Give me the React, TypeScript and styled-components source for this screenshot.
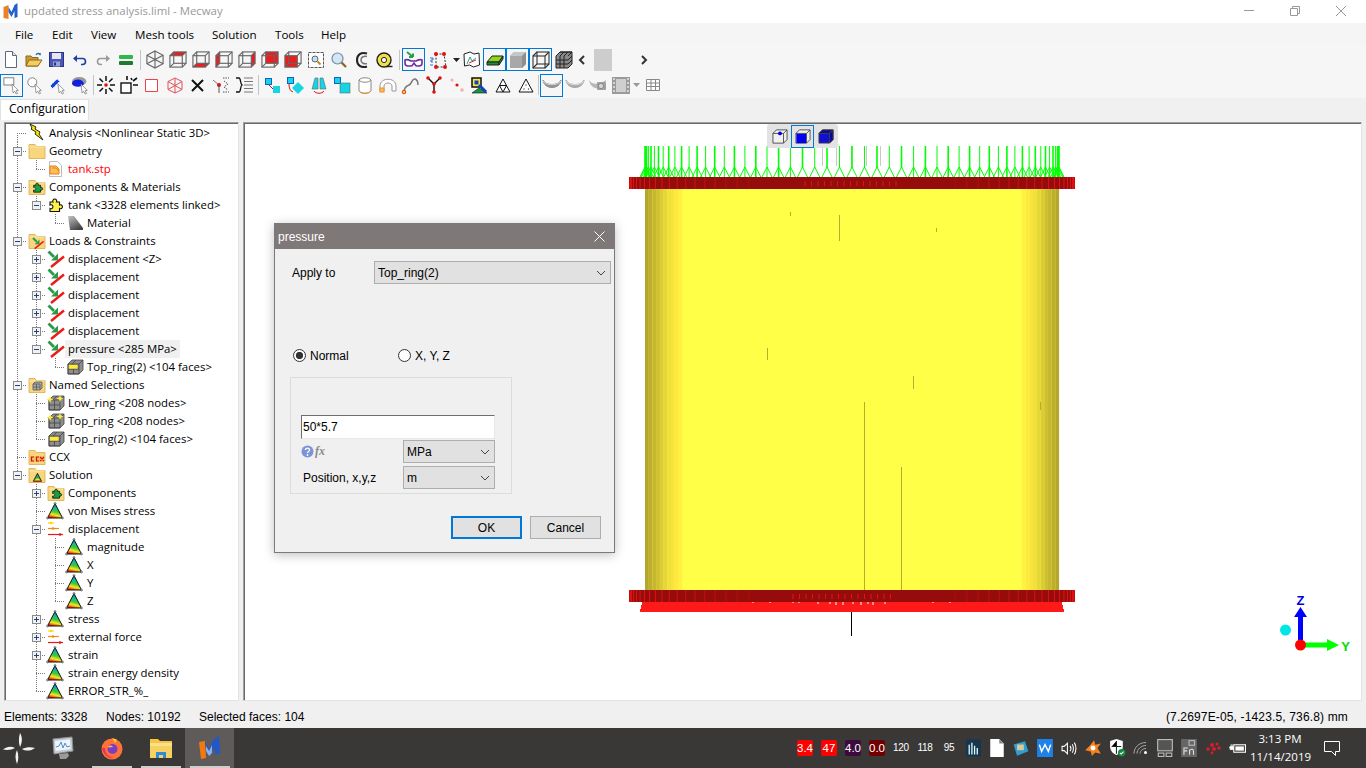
import React from "react";
import styled, { createGlobalStyle } from "styled-components";

const GlobalStyle = createGlobalStyle`
  html, body { margin: 0; padding: 0; background: #f0f0f0; overflow: hidden; }
  #root { width: 1366px; height: 768px; }
`;

const UI = `"Open Sans", "Noto Sans", sans-serif`;
const CLASSIC = `"Liberation Sans", Arial, sans-serif`;

const Page = styled.div`
  position: relative;
  width: 1366px;
  height: 768px;
  display: flex;
  flex-direction: column;
  overflow: hidden;
  background: #f0f0f0;
  font-family: ${UI};
  font-size: 12px;
  color: #000;
`;

const Glyph = styled.svg`
  display: block;
  flex: none;
  overflow: visible;
`;

const TitleBar = styled.div`
  height: 23px;
  box-sizing: border-box;
  display: flex;
  align-items: center;
  background: #fff;
  padding: 0 2px 2px 3px;
`;

const TitleText = styled.span`
  margin-left: 6px;
  font-size: 11.4px;
  color: #999;
  flex: 1;
`;

const WinButton = styled.div`
  width: 46px;
  height: 21px;
  display: flex;
  align-items: center;
  justify-content: center;
`;

const MenuBar = styled.div`
  height: 22px;
  display: flex;
  align-items: center;
  background: #f5f5f5;
  padding-left: 15px;
`;

const MenuItem = styled.span<{ $w: number }>`
  width: ${(p) => p.$w}px;
  font-size: 11.6px;
`;

const ToolRow = styled.div<{ $h: number; $top?: number }>`
  height: ${(p) => p.$h}px;
  box-sizing: border-box;
  padding-top: ${(p) => p.$top ?? 0}px;
  display: flex;
  align-items: center;
  background: #f6f6f6;
`;

const ToolButton = styled.div<{ $on?: boolean; $w?: number }>`
  width: ${(p) => p.$w ?? 23}px;
  height: 23px;
  flex: none;
  box-sizing: border-box;
  display: flex;
  align-items: center;
  justify-content: center;
  border: ${(p) => (p.$on ? "1px solid #0078d7" : "none")};
`;

const ToolSep = styled.div<{ $w?: number }>`
  width: ${(p) => p.$w ?? 6}px;
  height: 20px;
  flex: none;
  background: linear-gradient(#c4c4c4, #c4c4c4) center / 1px 100% no-repeat;
`;

const ScrollStrip = styled.div`
  width: 82px;
  height: 22px;
  flex: none;
  display: flex;
  align-items: center;
  margin-left: -3px;
`;

const ScrollArrow = styled.span`
  width: 18px;
  display: flex;
  justify-content: center;
`;

const ScrollThumb = styled.div`
  width: 18px;
  height: 22px;
  margin-left: 4px;
  margin-right: 23px;
  background: #cdcdcd;
`;

const TabStrip = styled.div`
  height: 22px;
  display: flex;
  align-items: flex-end;
  background: #f0f0f0;
  box-sizing: border-box;
  padding-top: 1px;
`;

const Tab = styled.div`
  width: 89px;
  height: 21px;
  box-sizing: border-box;
  background: #fff;
  border: 1px solid #e2e2e2;
  border-bottom: none;
  display: flex;
  align-items: center;
  padding: 0 0 3px 8px;
  font-size: 12px;
`;

const Workspace = styled.div`
  height: 586px;
  box-sizing: border-box;
  display: flex;
  gap: 4px;
  padding: 2px 4px 5px;
`;

const TreePanel = styled.div`
  width: 235px;
  flex: none;
  box-sizing: border-box;
  overflow: hidden;
  background: #fff;
  border: 1px solid #e3e3e3;
  border-top-color: #a0a0a0;
  border-left-color: #a0a0a0;
  box-shadow: inset 1px 1px #696969;
  padding: 1px 0 0 3px;
`;

const TreeRow = styled.div`
  height: 18px;
  display: flex;
  align-items: center;
`;

const dots = {
  v: "repeating-linear-gradient(to bottom, #7a7a7a 0 1px, transparent 1px 2px)",
  h: "repeating-linear-gradient(to right, #7a7a7a 0 1px, transparent 1px 2px)",
};

type Kind = "none" | "pass" | "tee" | "end" | "start";

const kindBackground = (k: Kind) => {
  if (k === "pass") return `${dots.v} 9px 0 / 1px 100% no-repeat`;
  if (k === "tee") return `${dots.v} 9px 0 / 1px 100% no-repeat, ${dots.h} 9px 9px / 10px 1px no-repeat`;
  if (k === "end") return `${dots.v} 9px 0 / 1px 10px no-repeat, ${dots.h} 9px 9px / 10px 1px no-repeat`;
  if (k === "start") return `${dots.v} 9px 9px / 1px 9px no-repeat, ${dots.h} 9px 9px / 10px 1px no-repeat`;
  return "none";
};

const GuideCell = styled.div<{ $kind: Kind }>`
  width: 19px;
  height: 18px;
  flex: none;
  display: flex;
  align-items: center;
  justify-content: center;
  padding-right: 1px;
  box-sizing: border-box;
  background: ${(p) => kindBackground(p.$kind)};
`;

const TreeIconSlot = styled.div`
  width: 18px;
  height: 18px;
  flex: none;
  margin-left: 1px;
`;

const TreeLabel = styled.span<{ $red?: boolean; $hot?: boolean }>`
  padding: 0 3px;
  height: 18px;
  line-height: 17px;
  white-space: nowrap;
  font-size: 11.4px;
  color: ${(p) => (p.$red ? "#ff0000" : "#000")};
  background: ${(p) => (p.$hot ? "#f0f0f0" : "transparent")};
`;

const Canvas = styled.div`
  position: relative;
  flex: 1;
  box-sizing: border-box;
  overflow: hidden;
  background: #fff;
  border: 1px solid #e3e3e3;
  border-top-color: #a0a0a0;
  border-left-color: #a0a0a0;
  box-shadow: inset 1px 1px #696969;
`;

const ViewOverlay = styled.div`
  position: absolute;
  left: 523px;
  top: 1px;
  height: 24px;
  display: flex;
  align-items: center;
  padding: 0 1px;
  background: #e3e3e3;
  border-radius: 3px;
`;

const StatusBar = styled.div`
  height: 22px;
  display: flex;
  align-items: center;
  padding: 0 18px 0 4px;
  font-family: ${CLASSIC};
  font-size: 12px;
`;

const StatusItem = styled.span<{ $w?: number; $wide?: boolean }>`
  width: ${(p) => (p.$w ? `${p.$w}px` : "auto")};
  white-space: nowrap;
  letter-spacing: ${(p) => (p.$wide ? 0.15 : 0)}px;
`;

const StatusSpacer = styled.div`
  flex: 1;
`;

const TaskBar = styled.div`
  height: 40px;
  display: flex;
  align-items: center;
  background: #393837;
  color: #fff;
`;

const StartSlot = styled.div`
  width: 38px;
  height: 40px;
  flex: none;
  display: flex;
  align-items: center;
  justify-content: center;
`;

const AppTile = styled.div<{ $active?: boolean; $running?: boolean }>`
  width: 49px;
  height: 40px;
  flex: none;
  display: flex;
  align-items: center;
  justify-content: center;
  background: ${(p) =>
    p.$running ? "linear-gradient(#d0cecd, #d0cecd) center bottom / 40px 2px no-repeat" : "none"};
  background-color: ${(p) => (p.$active ? "#5f5b5a" : "transparent")};
`;

const TaskSpacer = styled.div`
  flex: 1;
`;

const TrayBadge = styled.div<{ $bg?: string }>`
  width: 24px;
  flex: none;
  display: flex;
  justify-content: center;
  font-family: ${CLASSIC};
  font-size: ${(p) => (p.$bg ? 11.5 : 10)}px;
  letter-spacing: ${(p) => (p.$bg ? 0 : -0.3)}px;
  span {
    display: block;
    width: 16px;
    height: 16px;
    line-height: 16px;
    text-align: center;
    border-radius: 2px;
    white-space: nowrap;
    background: ${(p) => p.$bg ?? "transparent"};
  }
`;

const TrayIcon = styled.div`
  width: 24px;
  flex: none;
  display: flex;
  justify-content: center;
`;

const Clock = styled.div`
  width: 60px;
  margin-left: 1px;
  text-align: center;
  font-size: 11.5px;
  line-height: 18px;
  white-space: nowrap;
`;

const NotifySlot = styled.div`
  width: 56px;
  flex: none;
  box-sizing: border-box;
  display: flex;
  justify-content: center;
  padding-right: 12px;
`;

/* dialog */
const Dialog = styled.div`
  position: absolute;
  left: 274px;
  top: 223px;
  width: 341px;
  height: 330px;
  box-sizing: border-box;
  border: 1px solid #7a7a7a;
  background: #f0f0f0;
  box-shadow: 0 2px 10px rgba(0, 0, 0, 0.25);
  font-family: ${CLASSIC};
  font-size: 12px;
`;

const DialogTitle = styled.div`
  height: 25px;
  display: flex;
  align-items: center;
  justify-content: space-between;
  background: #7f7878;
  color: #fff;
  padding: 0 9px 0 3px;
`;

const DialogBody = styled.div`
  padding-top: 12px;
`;

const ApplyRow = styled.div`
  height: 23px;
  display: flex;
  align-items: center;
  padding-left: 17px;
`;

const ApplyLabel = styled.span`
  width: 82px;
`;

const SelectBox = styled.div<{ $w: number }>`
  width: ${(p) => p.$w}px;
  height: 23px;
  box-sizing: border-box;
  flex: none;
  display: flex;
  align-items: center;
  justify-content: space-between;
  padding: 0 4px 0 3px;
  background: #e1e1e1;
  border: 1px solid #adadad;
`;

const RadioRow = styled.div`
  height: 22px;
  margin-top: 60px;
  display: flex;
  align-items: center;
  padding: 1px 0 0 18px;
  box-sizing: border-box;
`;

const RadioOption = styled.label<{ $w: number }>`
  width: ${(p) => p.$w}px;
  display: flex;
  align-items: center;
  gap: 4px;
`;

const RadioDot = styled.span<{ $on?: boolean }>`
  width: 13px;
  height: 13px;
  box-sizing: border-box;
  flex: none;
  border-radius: 50%;
  border: 1px solid #333;
  background: ${(p) =>
    p.$on ? "radial-gradient(circle, #333 0 3.4px, #fff 3.9px)" : "#fff"};
`;

const GroupBox = styled.div`
  width: 222px;
  height: 117px;
  box-sizing: border-box;
  margin: 11px 0 0 15px;
  padding: 37px 16px 0 10px;
  border: 1px solid #dcdcdc;
`;

const ValueInput = styled.div`
  height: 24px;
  box-sizing: border-box;
  display: flex;
  align-items: center;
  padding-left: 1px;
  background: #fff;
  border: 1px solid #e8e8e8;
  border-top: 1px solid #6e6e6e;
  border-left: 1px solid #6e6e6e;
`;

const FieldRow = styled.div<{ $gap: number }>`
  display: flex;
  align-items: center;
  justify-content: space-between;
  margin-top: ${(p) => p.$gap}px;
`;

const HelpGroup = styled.div`
  display: flex;
  align-items: center;
  gap: 1px;
`;

const FxMark = styled.span`
  font-family: "Liberation Serif", serif;
  font-style: italic;
  font-weight: 700;
  font-size: 12px;
  color: #8a8a8a;
`;

const PositionLabel = styled.span`
  margin-left: 2px;
`;

const ButtonRow = styled.div`
  display: flex;
  justify-content: flex-end;
  gap: 8px;
  margin-top: 22px;
  padding-right: 13px;
`;

const DialogButton = styled.div<{ $primary?: boolean }>`
  width: 71px;
  height: 23px;
  box-sizing: border-box;
  display: flex;
  align-items: center;
  justify-content: center;
  background: #e1e1e1;
  border: ${(p) => (p.$primary ? "2px solid #0078d7" : "1px solid #adadad")};
`;

/* ---------- toolbar icons ---------- */

const Chevron = () => (
  <Glyph width="10" height="6" viewBox="0 0 10 6">
    <path d="M1 1l4 4 4-4" fill="none" stroke="#444" />
  </Glyph>
);

type Face = "none" | "top" | "bottom" | "left" | "right" | "back" | "front" | "spokes";

const FACE_POINTS: Record<string, string> = {
  top: "2,6 6,2 19,2 15,6",
  bottom: "2,18 6,14 19,14 15,18",
  left: "2,6 6,2 6,14 2,18",
  right: "15,6 19,2 19,14 15,18",
  back: "6,2 19,2 19,14 6,14",
  front: "2,6 15,6 15,18 2,18",
};

const WireCube = ({ face }: { face: Face }) => (
  <Glyph width="20" height="19" viewBox="0 0 21 20">
    {FACE_POINTS[face] && <polygon points={FACE_POINTS[face]} fill="#ee1c1c" />}
    {face === "spokes" ? (
      <g fill="none" stroke="#666" strokeWidth="1.2">
        <polygon points="10.5,1 19,5.5 19,14.5 10.5,19 2,14.5 2,5.5" />
        <path d="M10.5 10V1M10.5 10L2 14.5M10.5 10L19 14.5M10.5 10V19M10.5 10L2 5.5M10.5 10L19 5.5" />
      </g>
    ) : (
      <g fill="none" stroke="#666" strokeWidth="1.2">
        <rect x="2" y="6" width="13" height="12" />
        <rect x="6" y="2" width="13" height="12" />
        <path d="M2 6L6 2M15 6L19 2M15 18L19 14M2 18L6 14" />
      </g>
    )}
  </Glyph>
);

const ArrowTail = () => <path d="M10 9l7 7-2.4.3 1.6 3-1.6.7-1.4-3-2 1.8z" fill="#fff" stroke="#777" strokeWidth=".8" />;

const ScrollChevron = ({ dir }: { dir: "left" | "right" }) => (
  <Glyph width="7" height="10" viewBox="0 0 7 10">
    <path d={dir === "left" ? "M6 1L2 5l4 4" : "M1 1l4 4-4 4"} fill="none" stroke="#333" strokeWidth="2" />
  </Glyph>
);

const tool = {
  newDoc: (
    <Glyph width="14" height="17" viewBox="0 0 14 17">
      <path d="M1.5.5h7l4 4v12h-11z" fill="#fff" stroke="#5a6a80" />
      <path d="M8.5.5v4h4" fill="#dfe7f2" stroke="#5a6a80" />
    </Glyph>
  ),
  open: (
    <Glyph width="18" height="16" viewBox="0 0 18 16">
      <path d="M1 14V4h5l1 1.5h6V14z" fill="#c99a33" stroke="#8b6a1d" />
      <path d="M1 14l3-6h13l-4 6z" fill="#f4cd5e" stroke="#8b6a1d" />
      <path d="M11 3c1-2 3-2 4-1" fill="none" stroke="#2f6fb0" strokeWidth="1.2" />
      <path d="M16 .8l-.4 2.8-2.4-1z" fill="#2f6fb0" />
    </Glyph>
  ),
  save: (
    <Glyph width="15" height="15" viewBox="0 0 15 15">
      <rect x=".5" y=".5" width="14" height="14" fill="#4b57b8" stroke="#2c3480" />
      <rect x="3" y="1" width="9" height="6" fill="#e8e8f5" />
      <rect x="4" y="9.5" width="7" height="5" fill="#9aa0d8" />
      <rect x="5" y="10.5" width="2" height="3" fill="#2c3480" />
    </Glyph>
  ),
  undo: (
    <Glyph width="14" height="10" viewBox="0 0 14 10">
      <path d="M3 3.5h6.5a3 3 0 0 1 0 6H8" fill="none" stroke="#1c3fa8" strokeWidth="1.6" />
      <path d="M0 3.5L4 0v7z" fill="#1c3fa8" />
    </Glyph>
  ),
  redo: (
    <Glyph width="14" height="10" viewBox="0 0 14 10">
      <path d="M11 3.5H4.5a3 3 0 0 0 0 6H6" fill="none" stroke="#9a9a9a" strokeWidth="1.6" />
      <path d="M14 3.5L10 0v7z" fill="#9a9a9a" />
    </Glyph>
  ),
  bars: (
    <Glyph width="14" height="12" viewBox="0 0 14 12">
      <rect y="1" width="14" height="4" rx="1" fill="#2fb84a" />
      <rect y="7" width="14" height="4" rx="1" fill="#1f7a34" />
    </Glyph>
  ),
  zoomBox: (
    <Glyph width="16" height="16" viewBox="0 0 16 16">
      <rect x=".5" y=".5" width="15" height="15" fill="#fff" stroke="#555" strokeDasharray="3 1" />
      <circle cx="7" cy="7" r="3" fill="#bfe0f5" stroke="#666" />
      <path d="M9.5 9.5l3 3" stroke="#c08a2c" strokeWidth="2" />
    </Glyph>
  ),
  magnifier: (
    <Glyph width="16" height="16" viewBox="0 0 16 16">
      <circle cx="6.5" cy="6.5" r="5.5" fill="#cfe6f7" stroke="#7a8a99" strokeWidth="1.2" />
      <path d="M10.5 10.5l4.5 4.5" stroke="#8a6a30" strokeWidth="2.4" />
    </Glyph>
  ),
  rotate: (
    <Glyph width="14" height="18" viewBox="0 0 14 18">
      <path d="M12 2.500C6 .5 2 4 2 9s4 8.500 10 6.500" fill="none" stroke="#222" strokeWidth="2" />
      <path d="M12 5.500C9 4.500 6 6 6 9s3 4.500 6 3.500" fill="none" stroke="#777" strokeWidth="1.500" />
    </Glyph>
  ),
  tape: (
    <Glyph width="17" height="16" viewBox="0 0 17 16">
      <circle cx="8" cy="8" r="7" fill="#f1e04a" stroke="#222" strokeWidth="1.400" />
      <circle cx="8" cy="8" r="2.600" fill="#fff" stroke="#222" />
      <path d="M10 14.500h6.500" stroke="#222" strokeWidth="1.400" />
    </Glyph>
  ),
  glasses: (
    <Glyph width="19" height="18" viewBox="0 0 19 18">
      <path d="M3 1l6 5M9 6V2.500M9 6H5" stroke="#27a04a" strokeWidth="2" fill="none" />
      <path d="M1 9c2-1 4 0 6 1h5c2-1 4-2 6-1v3c0 2-1 3-3 3h-2c-2 0-2-2-3-3-1 1-1 3-3 3H4c-2 0-3-1-3-3z" fill="#fff" stroke="#6a2fa0" strokeWidth="1.600" />
    </Glyph>
  ),
  dots: (
    <Glyph width="19" height="19" viewBox="0 0 19 19">
      <path d="M7 4h8l2 13H7z" fill="none" stroke="#333" strokeDasharray="2 1.500" />
      <circle cx="7" cy="4" r="2" fill="#e01010" />
      <circle cx="15" cy="4" r="2" fill="#e01010" />
      <circle cx="7" cy="17" r="2" fill="#e01010" />
      <circle cx="16" cy="17" r="2" fill="#e01010" />
      <path d="M1 8h3v2H2v2h2M1 15h3" fill="none" stroke="#2f6fe0" />
    </Glyph>
  ),
  drop: (
    <Glyph width="7" height="4" viewBox="0 0 7 4">
      <path d="M0 0h7L3.500 4z" fill="#222" />
    </Glyph>
  ),
  paper: (
    <Glyph width="17" height="17" viewBox="0 0 17 17">
      <path d="M1 3l6-2 4 2 5-1 .5 12-6 2-4-2-5 1z" fill="#fff" stroke="#222" />
      <path d="M4 13l3-7 2 4 4-3" fill="none" stroke="#2aa198" />
      <path d="M6 12l7-3" stroke="#e02020" />
    </Glyph>
  ),
  slab: (
    <Glyph width="18" height="14" viewBox="0 0 18 14">
      <path d="M1 9l5-6h11l-4 6z" fill="#8fd420" stroke="#222" />
      <path d="M1 9h12v3H1z" fill="#1f8a3a" stroke="#222" />
      <path d="M13 9l4-6v3l-4 6z" fill="#1f8a3a" stroke="#222" />
    </Glyph>
  ),
  solid: (
    <Glyph width="18" height="18" viewBox="0 0 18 18">
      <path d="M1 5l4-4h12v12l-4 4H1z" fill="#a8a8a8" />
      <path d="M1 5l4-4h12l-4 4z" fill="#c6c6c6" />
      <path d="M13 5l4-4v12l-4 4z" fill="#8e8e8e" />
    </Glyph>
  ),
  wire: (
    <Glyph width="18" height="18" viewBox="0 0 18 18">
      <g fill="none" stroke="#333" strokeWidth="1.100">
        <rect x="1" y="5" width="12" height="12" />
        <rect x="5" y="1" width="12" height="12" />
        <path d="M1 5l4-4M13 5l4-4M13 17l4-4M1 17l4-4" />
      </g>
    </Glyph>
  ),
  mesh: (
    <Glyph width="18" height="18" viewBox="0 0 18 18">
      <path d="M1 5l4-4h12v12l-4 4H1z" fill="#8a8a8a" stroke="#222" />
      <path d="M1 9h12M1 13h12M5 5v12M9 5v12M13 5l4-4M5 5l4-4M9 5l4-4M5 1h12M13 9l4-4M13 13l4-4" stroke="#222" fill="none" />
    </Glyph>
  ),
  pickBox: (
    <Glyph width="20" height="18" viewBox="0 0 20 20">
      <rect x="1" y="2" width="11" height="8" fill="#fff" stroke="#777" />
      <ArrowTail />
    </Glyph>
  ),
  pickNode: (
    <Glyph width="20" height="18" viewBox="0 0 20 20">
      <circle cx="7" cy="7" r="5" fill="#fff" stroke="#777" />
      <ArrowTail />
    </Glyph>
  ),
  pickEdge: (
    <Glyph width="20" height="18" viewBox="0 0 20 20">
      <path d="M1 11l8-8 3 3-8 8z" fill="#1540e0" stroke="#fff" strokeDasharray="3 1" />
      <ArrowTail />
    </Glyph>
  ),
  pickFace: (
    <Glyph width="20" height="18" viewBox="0 0 20 20">
      <ellipse cx="8" cy="6" rx="8" ry="5" fill="#999" />
      <ellipse cx="6.500" cy="8" rx="6.500" ry="4" fill="#1020e0" />
      <ArrowTail />
    </Glyph>
  ),
  burst: (
    <Glyph width="18" height="18" viewBox="0 0 18 18">
      <circle cx="9" cy="9" r="1.800" fill="#e01010" />
      <path d="M9 0v5M9 13v5M0 9h5M13 9h5M2.500 2.500l3.500 3.500M12 12l3.500 3.500M15.500 2.500L12 6M6 12l-3.500 3.500" stroke="#111" strokeWidth="1.500" />
    </Glyph>
  ),
  burstBox: (
    <Glyph width="18" height="18" viewBox="0 0 18 18">
      <rect x="1" y="7" width="10" height="10" fill="#fff" stroke="#111" strokeWidth="1.400" />
      <path d="M13 5l4-3M7 4V0M13 9h5M11 2l1 2" stroke="#111" strokeWidth="1.600" />
    </Glyph>
  ),
  redSquare: (
    <Glyph width="13" height="13" viewBox="0 0 13 13">
      <path d="M.5.500h12v12H.5z" fill="#fff" stroke="#f0404a" />
    </Glyph>
  ),
  redCube: (
    <Glyph width="16" height="17" viewBox="0 0 16 17">
      <g fill="none" stroke="#e0505a">
        <path d="M8 1l7 3.500v8L8 16l-7-3.500v-8z" />
        <path d="M8 8.500V16M8 8.500l7-4M8 8.500l-7-4M1 12.500l7-4 7 4M8 1v7.500" />
      </g>
    </Glyph>
  ),
  cross: (
    <Glyph width="13" height="13" viewBox="0 0 13 13">
      <path d="M1 1l11 11M12 1L1 12" stroke="#111" strokeWidth="2" />
    </Glyph>
  ),
  nodeZig: (
    <Glyph width="18" height="18" viewBox="0 0 18 18">
      <path d="M1 4l6 5" stroke="#777" />
      <circle cx="7" cy="9" r="2" fill="#e01010" />
      <path d="M7 9v8" stroke="#555" />
      <path d="M11 2h6M11 16h6M12 5l4 3-4 3 4 3" fill="none" stroke="#555" strokeDasharray="1.500 1" />
    </Glyph>
  ),
  listBrace: (
    <Glyph width="18" height="16" viewBox="0 0 18 16">
      <path d="M1 1h3c2 0 1 6 3 7-2 1-1 7-3 7H1" fill="none" stroke="#111" strokeWidth="1.300" />
      <path d="M9 1h9M9 4.500h9M9 8h9M9 11.500h9M9 15h9" stroke="#777" />
    </Glyph>
  ),
  squares: (
    <Glyph width="15" height="15" viewBox="0 0 15 15">
      <rect x=".5" y=".5" width="6" height="6" fill="#15d5e5" stroke="#1060d0" />
      <rect x="8" y="8" width="7" height="7" fill="#15d5e5" />
      <path d="M4 7l4 4" stroke="#e01010" />
    </Glyph>
  ),
  squareDiamond: (
    <Glyph width="17" height="17" viewBox="0 0 17 17">
      <rect x=".5" y=".5" width="6" height="6" fill="#15d5e5" stroke="#1060d0" />
      <path d="M11 5l6 6-6 6-6-6z" fill="#15d5e5" />
      <path d="M2 7c0 4 1 7 4 8" stroke="#e01010" fill="none" />
    </Glyph>
  ),
  mirror: (
    <Glyph width="16" height="17" viewBox="0 0 16 17">
      <path d="M1 12L4 1h3v11zM15 12L12 1H9v11z" fill="#15d5e5" stroke="#666" strokeWidth=".6" />
      <path d="M3 14c2 3 8 3 10 0" fill="none" stroke="#e01010" />
    </Glyph>
  ),
  squareBig: (
    <Glyph width="16" height="16" viewBox="0 0 16 16">
      <rect x=".5" y=".5" width="6" height="6" fill="#15d5e5" stroke="#1060d0" />
      <rect x="6" y="6" width="10" height="10" fill="#15d5e5" stroke="#555" strokeWidth=".5" />
    </Glyph>
  ),
  can: (
    <Glyph width="14" height="17" viewBox="0 0 14 17">
      <path d="M1 3c2-3 10-3 12 0v11c-2 3-10 3-12 0z" fill="#fff" stroke="#888" />
      <path d="M1 3c2 3 10 3 12 0" fill="none" stroke="#888" />
      <path d="M1 14c2 3 10 3 12 0" fill="none" stroke="#f09020" />
    </Glyph>
  ),
  arch: (
    <Glyph width="18" height="15" viewBox="0 0 18 15">
      <path d="M1 13V8c0-9 16-9 16 0v5h-4V8c0-4-8-4-8 0v5z" fill="#fff" stroke="#999" />
      <rect x="1" y="10" width="4" height="4" fill="#f0c060" stroke="#f09020" />
    </Glyph>
  ),
  sweep: (
    <Glyph width="17" height="17" viewBox="0 0 17 17">
      <path d="M2 16c0-5 2-7 5-8s3-7 6-6 3 5 3 6" fill="none" stroke="#777" strokeWidth="1.500" />
      <circle cx="2" cy="15" r="1.800" fill="#f0d040" stroke="#e04020" />
    </Glyph>
  ),
  fork: (
    <Glyph width="16" height="18" viewBox="0 0 16 18">
      <path d="M2 2l6 6 6-6M8 8v8" stroke="#111" strokeWidth="1.400" fill="none" />
      <circle cx="2" cy="2" r="1.800" fill="#e01010" />
      <circle cx="14" cy="2" r="1.800" fill="#e01010" />
      <circle cx="8" cy="8" r="1.800" fill="#e01010" />
      <circle cx="8" cy="16" r="1.800" fill="#e01010" />
    </Glyph>
  ),
  scatter: (
    <Glyph width="14" height="14" viewBox="0 0 14 14">
      <circle cx="2" cy="2" r="1.500" fill="#eeb0b0" />
      <circle cx="7" cy="7" r="1.600" fill="#e01010" />
      <circle cx="12" cy="12" r="1.700" fill="#eeb0b0" />
    </Glyph>
  ),
  nodeMap: (
    <Glyph width="17" height="17" viewBox="0 0 17 17">
      <rect x="1" y="1" width="9" height="9" fill="#f5e94a" stroke="#111" strokeWidth="1.500" />
      <rect x="3.500" y="3.500" width="4" height="4" fill="#1540c0" />
      <path d="M1 16l7-5 8 5z" fill="#129a3a" stroke="#111" strokeWidth=".6" />
      <path d="M8 8l7 7" stroke="#1540c0" strokeWidth="3" />
    </Glyph>
  ),
  triTri: (
    <Glyph width="16" height="15" viewBox="0 0 16 15">
      <path d="M8 1l7 13H1zM4.500 7.500h7M8 14L4.500 7.500M8 14l3.500-6.500" fill="#fff" stroke="#111" />
    </Glyph>
  ),
  triDots: (
    <Glyph width="16" height="15" viewBox="0 0 16 15">
      <path d="M8 1l7 13H1z" fill="#fff" stroke="#111" />
      <circle cx="8" cy="7" r=".7" fill="#444" />
      <circle cx="6" cy="11" r=".7" fill="#444" />
      <circle cx="10.500" cy="11" r=".7" fill="#444" />
    </Glyph>
  ),
  bowl: (shade: string) => (
    <Glyph width="20" height="12" viewBox="0 0 20 12">
      <path d="M1 1c2 6 16 6 18 0-1 10-17 10-18 0z" fill={shade} stroke={shade} />
      <path d="M1 2c3 5 15 5 18 0" fill="none" stroke="#fff" strokeWidth=".6" />
    </Glyph>
  ),
  camera: (
    <Glyph width="19" height="16" viewBox="0 0 19 16">
      <path d="M1 3c3 5 9 5 17 0-1 10-15 12-17 0z" fill="#b8b8b8" />
      <rect x="9" y="5" width="9" height="8" rx="1" fill="#a0a0a0" />
      <circle cx="13" cy="9" r="2.600" fill="#d6d6d6" stroke="#888" />
    </Glyph>
  ),
  film: (
    <Glyph width="18" height="17" viewBox="0 0 18 17">
      <rect width="18" height="17" fill="#9a9a9a" />
      <rect x="4" y="2" width="10" height="13" fill="#cfcfcf" />
      <path d="M1 2h2M1 6h2M1 10h2M1 14h2M15 2h2M15 6h2M15 10h2M15 14h2" stroke="#e6e6e6" strokeWidth="1.500" />
    </Glyph>
  ),
  dropGray: (
    <Glyph width="7" height="4" viewBox="0 0 7 4">
      <path d="M0 0h7L3.500 4z" fill="#999" />
    </Glyph>
  ),
  table: (
    <Glyph width="14" height="12" viewBox="0 0 14 12">
      <path d="M.5.500h13v11H.5zM.5 4h13M.5 7.500h13M5 .500v11M9.500.500v11" fill="#fff" stroke="#888" />
    </Glyph>
  ),
};

/* ---------- tree icons ---------- */

const FolderBase = ({ children }: { children?: React.ReactNode }) => (
  <Glyph width="18" height="18" viewBox="0 0 18 18">
    <path d="M1 2.500h6l1.500 2H17v12H1z" fill="#f8d67e" stroke="#d9a94a" strokeWidth=".8" />
    <path d="M1.500 5h15" stroke="#fdeaa8" />
    {children}
  </Glyph>
);

const Puzzle = ({ fill, stroke, transform }: { fill: string; stroke: string; transform?: string }) => (
  <path
    transform={transform}
    d="M3 6h3a2 2 0 1 1 3.500 0h3v3a2 2 0 1 1 0 3.500v3H3v-3a2 2 0 1 0 0-3.500z"
    fill={fill}
    stroke={stroke}
    strokeWidth="1.100"
  />
);

const LoadMark = () => (
  <>
    <path d="M4 17L17 6.500" stroke="#f01818" strokeWidth="2.400" />
    <path d="M1.500 1.500L7 7" stroke="#2a9a48" strokeWidth="2.800" />
    <path d="M11 10.500V3.500L4 10.500z" fill="#2a9a48" />
  </>
);

const GrayCube = ({ mark }: { mark: "faces" | "nodes" }) => (
  <Glyph width="18" height="18" viewBox="0 0 18 18">
    <path d="M2 6l4-4h11v10l-4 4H2z" fill="#8e8e8e" stroke="#444" strokeWidth=".8" />
    <path d="M2 6h11v10H2zM7.500 6v10M2 11h11M13 6l4-4M6 6l4-4" fill="none" stroke="#444" strokeWidth=".8" />
    {mark === "faces" ? (
      <rect x="2.500" y="6.500" width="9.500" height="4.500" fill="#ffe93c" stroke="#444" strokeWidth=".4" />
    ) : (
      <>
        <path d="M2 2.500l1 2.500 2.500 1-2.500 1-1 2.500-1-2.500L-1.500 6 1 5z" fill="#ffe93c" transform="translate(1 -.5)" />
        <path d="M13 1l1 2.500 2.500 1-2.500 1-1 2.500-1-2.500-2.500-1 2.500-1z" fill="#ffe93c" />
      </>
    )}
  </Glyph>
);

const Contour = () => (
  <Glyph width="18" height="18" viewBox="0 0 18 18">
    <defs>
      <linearGradient id="contour" x1=".6" y1="0" x2=".35" y2="1">
        <stop offset="0" stopColor="#1050d0" />
        <stop offset=".3" stopColor="#10b8a0" />
        <stop offset=".55" stopColor="#40c830" />
        <stop offset=".78" stopColor="#f8e820" />
        <stop offset="1" stopColor="#e81010" />
      </linearGradient>
    </defs>
    <path d="M8 1.500l7.500 14.500H.5z" fill="url(#contour)" stroke="#111" strokeWidth="1" />
    <circle cx="8" cy="1.500" r=".9" fill="#fff" stroke="#111" strokeWidth=".6" />
    <circle cx=".5" cy="16" r=".9" fill="#fff" stroke="#111" strokeWidth=".6" />
    <circle cx="15.500" cy="16" r=".9" fill="#fff" stroke="#111" strokeWidth=".6" />
  </Glyph>
);

const treeIcon: Record<string, React.ReactNode> = {
  bolt: (
    <Glyph width="18" height="18" viewBox="0 0 18 18">
      <path d="M2 0l6 3-1 2 5 3-1 2 4 6-8-6 1-2-5-3 1-1z" fill="#ffe600" stroke="#111" strokeWidth=".9" />
    </Glyph>
  ),
  folder: <FolderBase />,
  file: (
    <Glyph width="18" height="18" viewBox="0 0 18 18">
      <path d="M2.500 1.500h8l4 4v11h-12z" fill="#fff" stroke="#bbb" />
      <path d="M3 6h6l3 3v5H3z" fill="#fbbf5a" stroke="#f07a10" />
      <path d="M5 8h4l3 3" fill="none" stroke="#f07a10" />
    </Glyph>
  ),
  folderPuzzle: (
    <FolderBase>
      <Puzzle fill="#18a040" stroke="#111" transform="translate(3.500 3) scale(.72)" />
    </FolderBase>
  ),
  puzzle: (
    <Glyph width="18" height="18" viewBox="0 0 18 18">
      <Puzzle fill="#fff34a" stroke="#111" />
    </Glyph>
  ),
  material: (
    <Glyph width="18" height="18" viewBox="0 0 18 18">
      <defs>
        <linearGradient id="wedge" x1="0" y1="0" x2=".6" y2="1">
          <stop offset="0" stopColor="#c4c4c4" />
          <stop offset="1" stopColor="#444" />
        </linearGradient>
      </defs>
      <path d="M2 2h6l9 12v2H4z" fill="url(#wedge)" />
    </Glyph>
  ),
  folderLoads: (
    <FolderBase>
      <g transform="translate(4 5) scale(.68)">
        <LoadMark />
      </g>
    </FolderBase>
  ),
  loads: (
    <Glyph width="18" height="18" viewBox="0 0 18 18">
      <LoadMark />
    </Glyph>
  ),
  faces: <GrayCube mark="faces" />,
  nodes: <GrayCube mark="nodes" />,
  folderCube: (
    <FolderBase>
      <g transform="translate(5 6)" fill="none" stroke="#555" strokeWidth=".8">
        <path d="M0 2l2-2h7v6l-2 2H0z" fill="#aaa" />
        <path d="M0 2h7v6M3.500 2v6M0 5h7" />
      </g>
    </FolderBase>
  ),
  folderCcx: (
    <Glyph width="18" height="18" viewBox="0 0 18 18">
      <path d="M1 2.500h6l1.500 2H17v12H1z" fill="#f8d67e" stroke="#d9a94a" strokeWidth=".8" />
      <path d="M2 8h14v6H2z" fill="#f8c060" />
      <path d="M6 9H3.500v4H6M11 9H8.500v4H11M12 9l4 4M16 9l-4 4" fill="none" stroke="#d01010" strokeWidth="1.200" />
    </Glyph>
  ),
  folderContour: (
    <FolderBase>
      <g transform="translate(4.500 6.500) scale(.55)">
        <path d="M9 1.500l7.500 14.500h-15z" fill="#20b060" stroke="#111" strokeWidth="1.500" />
        <path d="M3 15l4-4h4l4 4z" fill="#f5e020" />
        <path d="M3 15.500h12" stroke="#e81010" strokeWidth="1.500" />
      </g>
    </FolderBase>
  ),
  contour: <Contour />,
  arrows: (
    <Glyph width="18" height="18" viewBox="0 0 18 18">
      <path d="M1 3h6" stroke="#ffd800" strokeWidth="1.200" />
      <circle cx="4" cy="3" r="1.200" fill="#ffd800" />
      <path d="M1 8.500h11" stroke="#f58a10" strokeWidth="1.200" />
      <circle cx="6" cy="8.500" r="1.200" fill="#f58a10" />
      <path d="M1 14.500h15" stroke="#e81818" strokeWidth="1.200" />
      <circle cx="13" cy="14.500" r="1.300" fill="#e81818" />
    </Glyph>
  ),
};

/* ---------- tree data ---------- */

type Node = {
  label: string;
  icon: string;
  red?: boolean;
  hot?: boolean;
  closed?: boolean;
  children?: Node[];
};

const TREE: Node[] = [
  { label: "Analysis <Nonlinear Static 3D>", icon: "bolt" },
  { label: "Geometry", icon: "folder", children: [{ label: "tank.stp", icon: "file", red: true }] },
  {
    label: "Components & Materials",
    icon: "folderPuzzle",
    children: [
      {
        label: "tank <3328 elements linked>",
        icon: "puzzle",
        children: [{ label: "Material", icon: "material" }],
      },
    ],
  },
  {
    label: "Loads & Constraints",
    icon: "folderLoads",
    children: [
      { label: "displacement <Z>", icon: "loads", closed: true },
      { label: "displacement", icon: "loads", closed: true },
      { label: "displacement", icon: "loads", closed: true },
      { label: "displacement", icon: "loads", closed: true },
      { label: "displacement", icon: "loads", closed: true },
      {
        label: "pressure <285 MPa>",
        icon: "loads",
        hot: true,
        children: [{ label: "Top_ring(2) <104 faces>", icon: "faces" }],
      },
    ],
  },
  {
    label: "Named Selections",
    icon: "folderCube",
    children: [
      { label: "Low_ring <208 nodes>", icon: "nodes" },
      { label: "Top_ring <208 nodes>", icon: "nodes" },
      { label: "Top_ring(2) <104 faces>", icon: "faces" },
    ],
  },
  { label: "CCX", icon: "folderCcx" },
  {
    label: "Solution",
    icon: "folderContour",
    children: [
      { label: "Components", icon: "folderPuzzle", closed: true },
      { label: "von Mises stress", icon: "contour" },
      {
        label: "displacement",
        icon: "arrows",
        children: [
          { label: "magnitude", icon: "contour" },
          { label: "X", icon: "contour" },
          { label: "Y", icon: "contour" },
          { label: "Z", icon: "contour" },
        ],
      },
      { label: "stress", icon: "contour", closed: true },
      { label: "external force", icon: "arrows", closed: true },
      { label: "strain", icon: "contour", closed: true },
      { label: "strain energy density", icon: "contour" },
      { label: "ERROR_STR_%_", icon: "contour" },
    ],
  },
];

const Expander = ({ open }: { open: boolean }) => (
  <Glyph width="9" height="9" viewBox="0 0 9 9">
    <rect x=".5" y=".5" width="8" height="8" fill="#f2f2f2" stroke="#8a8a8a" />
    <path d={open ? "M2 4.500h5" : "M2 4.500h5M4.500 2v5"} stroke="#20408a" />
  </Glyph>
);

const TreeBranch = ({ nodes, trail }: { nodes: Node[]; trail: boolean[] }) => (
  <>
    {nodes.map((node, i) => {
      const isLast = i === nodes.length - 1;
      const isVeryFirst = trail.length === 0 && i === 0;
      const hasToggle = node.closed || !!node.children;
      const kind: Kind = isVeryFirst ? "start" : isLast ? "end" : "tee";
      return (
        <React.Fragment key={`${node.label}-${i}`}>
          <TreeRow>
            {trail.map((more, t) => (
              <GuideCell key={t} $kind={more ? "pass" : "none"} />
            ))}
            <GuideCell $kind={kind}>{hasToggle && <Expander open={!node.closed} />}</GuideCell>
            <TreeIconSlot>{treeIcon[node.icon]}</TreeIconSlot>
            <TreeLabel $red={node.red} $hot={node.hot}>
              {node.label}
            </TreeLabel>
          </TreeRow>
          {node.children && <TreeBranch nodes={node.children} trail={[...trail, !isLast]} />}
        </React.Fragment>
      );
    })}
  </>
);

/* ---------- model drawing ---------- */

const CENTER = 852;
const RADIUS = 207;
const SIDE_SHADES = ["#b5a72d", "#bdae2e", "#c6b730", "#cfc033", "#dbcc36", "#e5d63a", "#f0e03c", "#f8e33d", "#ffe93f", "#fff043"];

const ringX = (i: number, n: number, r = RADIUS) => CENTER + r * Math.sin((i / n) * Math.PI * 2);

const pressureTicks = Array.from({ length: 53 }, (_, i) => ringX(i - 26, 104));
const bandTicks = Array.from({ length: 53 }, (_, i) => ringX(i - 26, 104, 222)).filter(
  (x) => Math.abs(x - CENTER) > 95
);
const tickRun = (from: number, to: number) =>
  Array.from({ length: Math.floor((to - from) / 6.5) + 1 }, (_, i) => from + i * 6.5);

const ModelView = () => (
  <Glyph width="1117" height="577" viewBox="244 123 1117 577">
    {/* tank wall */}
    <rect x="645" y="189" width="414" height="402" fill="#ffff47" />
    {SIDE_SHADES.map((c, i) => (
      <React.Fragment key={c}>
        <rect x={645 + i * 3.7} y="189" width="3.800" height="402" fill={c} />
        <rect x={1055.300 - i * 3.7} y="189" width="3.800" height="402" fill={c} />
      </React.Fragment>
    ))}
    <g stroke="#b9ab2c" strokeWidth="1">
      <path d="M864.500 402V590M901.500 467V590M839.500 215V241M767.500 348V360M913.500 376V389M1040.500 402V410M790.500 212V216M936.500 228V232" />
    </g>
    {/* applied pressure arrows */}
    <g stroke="#c8c8c8">
      <path d="M822.500 146V166M836.500 146V166M851.500 146V166M866.500 146V166M880.500 146V166" />
    </g>
    <g fill="none" stroke="#00ff00">
      {pressureTicks.map((x, i) => (
        <React.Fragment key={i}>
          <path d={`M${x.toFixed(1)} 146V${Math.abs(x - CENTER) < 60 ? 168 : 177}`} strokeWidth={i % 2 ? 1 : 1.6} />
          <path d={`M${(x - 5).toFixed(1)} 177L${x.toFixed(1)} 167L${(x + 5).toFixed(1)} 177`} />
        </React.Fragment>
      ))}
    </g>
    {/* end rings */}
    <rect x="629" y="177" width="446" height="12" fill="#960c0c" />
    <rect x="629" y="590" width="446" height="12" fill="#960c0c" />
    <g stroke="#e21212">
      {bandTicks.map((x, i) => (
        <React.Fragment key={i}>
          <path d={`M${x.toFixed(1)} 177V189`} opacity={Math.min(1, (Math.abs(x - CENTER) - 60) / 140)} />
          <path d={`M${x.toFixed(1)} 590V602`} opacity={Math.min(1, (Math.abs(x - CENTER) - 60) / 140)} />
        </React.Fragment>
      ))}
      {tickRun(793, 892).map((x) => (
        <path key={x} d={`M${x.toFixed(1)} 594V599`} />
      ))}
      {tickRun(805, 900).map((x) => (
        <path key={x} d={`M${x.toFixed(1)} 181V186`} />
      ))}
    </g>
    {/* base */}
    <path d="M642 602H1062V605H1063V609H1064V612H640V609H641V605H642z" fill="#ff1a1a" />
    <path d="M753 602v1M770 602v1M793 602v1M799 602v1M818 602v2M830 602v2M836 602v3M843 602v3M853 602v2M861 602v3M868 602v2M873 602v3M885 602v2M933 602v1M950 602v1" stroke="#fff" />
    <path d="M851.500 612V636" stroke="#000" />
    {/* axis triad */}
    <path d="M1298 640V617H1294L1300.500 607L1307 617H1303V640z" fill="#0000ff" />
    <path d="M1304 642.500H1327V639L1339 645L1327 651V647.500H1304z" fill="#00ff00" />
    <circle cx="1300.500" cy="645" r="5.500" fill="#ff0000" />
    <circle cx="1285.500" cy="630" r="5.500" fill="#00e5e5" />
    <text x="1300.500" y="605" textAnchor="middle" fontFamily={CLASSIC} fontWeight="700" fontSize="13" fill="#0000d8">Z</text>
    <text x="1345.500" y="651" textAnchor="middle" fontFamily={CLASSIC} fontWeight="700" fontSize="13" fill="#00e000">Y</text>
  </Glyph>
);

const ViewCube = ({ mode }: { mode: "dot" | "face" | "solid" }) => (
  <Glyph width="16" height="15" viewBox="0 0 18 17">
    <path d="M1 5l4-4h12v11l-4 4H1z" fill={mode === "solid" ? "#1010d0" : "#f0f0f0"} stroke="#444" />
    {mode === "solid" && <path d="M13 5l4-4v11l-4 4zM1 5l4-4h12l-4 4z" fill="#0a0a90" stroke="#444" />}
    {mode !== "solid" && <path d="M1 5h12v11M13 5l4-4" fill="none" stroke="#444" />}
    {mode === "face" && <rect x="1.500" y="5.500" width="11" height="10.500" fill="#0000ee" />}
    {mode === "dot" && <circle cx="9" cy="5" r="2.200" fill="#0000ee" />}
  </Glyph>
);

/* ---------- tray ---------- */

const tray = {
  meter: (
    <Glyph width="15" height="18" viewBox="0 0 14 16">
      <rect width="14" height="16" rx="1" fill="#16364e" />
      <path d="M3 5v9M5.500 3v11M8 6v8M10.500 8v6" stroke="#dff" strokeWidth="1.200" />
    </Glyph>
  ),
  doc: (
    <Glyph width="14" height="18" viewBox="0 0 12 16">
      <path d="M0 0h8l4 4v12H0z" fill="#fff" />
      <path d="M8 0l4 4H8z" fill="#888" />
    </Glyph>
  ),
  disk: (
    <Glyph width="18" height="17" viewBox="0 0 15 15">
      <path d="M1 4l10-3 3 9-10 4z" fill="#2f9fd0" />
      <rect x="4" y="4" width="6" height="5" fill="#d8c89a" />
    </Glyph>
  ),
  waves: (
    <Glyph width="16" height="18" viewBox="0 0 14 16">
      <rect width="14" height="16" fill="#1e82ea" />
      <path d="M2 5l2 6 3-6 3 6 2-6" fill="none" stroke="#fff" strokeWidth="1.300" />
    </Glyph>
  ),
  sound: (
    <Glyph width="16" height="15" viewBox="0 0 15 14">
      <path d="M1 5h2l3-3v10L3 9H1z" fill="none" stroke="#fff" />
      <path d="M8.500 4.500c1 1.500 1 3.500 0 5M10.500 3c1.500 2 1.500 6 0 8M12.500 1.500c2 3 2 8 0 11" fill="none" stroke="#fff" />
    </Glyph>
  ),
  avast: (
    <Glyph width="18" height="18" viewBox="0 0 16 16">
      <path d="M9 1l1 4 5-1-3 4 3 5-5-1-3 3-1-4-5-1 4-4z" fill="#f5821f" />
      <circle cx="8" cy="8" r="2.200" fill="#fff" />
    </Glyph>
  ),
  shield: (
    <Glyph width="17" height="18" viewBox="0 0 16 17">
      <path d="M7 0l6 2v5c0 4-3 7-6 8-3-1-6-4-6-8V2z" fill="#fff" />
      <path d="M7 2v5H2.500M7 7h4.500M7 7v7" stroke="#222" strokeWidth="1" />
      <circle cx="12" cy="13" r="3.500" fill="#108a3c" />
      <path d="M10.300 13l1.200 1.200 2.200-2.200" fill="none" stroke="#fff" />
    </Glyph>
  ),
  wifi: (
    <Glyph width="16" height="14" viewBox="0 0 16 13">
      <path d="M1 12C1 6 6 1 13 1M4 12c0-4 4-8 9-8M7 12c0-2.500 3-5 6-5" fill="none" stroke="#aaa" />
      <circle cx="12.500" cy="11" r="1.500" fill="#fff" />
    </Glyph>
  ),
  monitor: (
    <Glyph width="16" height="18" viewBox="0 0 14 16">
      <rect x=".5" y=".5" width="13" height="10" fill="#555" stroke="#bbb" />
      <rect x="1" y="12.500" width="5" height="3" fill="none" stroke="#bbb" />
      <rect x="8" y="12.500" width="5" height="3" fill="none" stroke="#bbb" />
    </Glyph>
  ),
  fn: (
    <Glyph width="16" height="18" viewBox="0 0 14 16">
      <rect width="14" height="16" fill="#666" />
      <rect x="7" y="1.500" width="5" height="4" fill="none" stroke="#ccc" strokeWidth=".8" />
      <path d="M2.500 14V8H6M2.500 10.500h3M7.500 14V9.500M7.500 10c2-1.500 3.500-1 3.500 1v3" fill="none" stroke="#ddd" />
    </Glyph>
  ),
  dots: (
    <Glyph width="15" height="12" viewBox="0 0 15 12">
      <g fill="#d81c2c">
        <circle cx="2" cy="7" r="1.800" />
        <circle cx="6" cy="3" r="2" />
        <circle cx="11" cy="2" r="1.600" />
        <circle cx="13" cy="6" r="1.800" />
        <circle cx="8" cy="7" r="2" />
        <circle cx="6" cy="11" r="1.400" />
      </g>
    </Glyph>
  ),
  battery: (
    <Glyph width="17" height="13" viewBox="0 0 16 12">
      <rect x="4.500" y="2.500" width="11" height="7" fill="none" stroke="#fff" />
      <rect x="6" y="4" width="8" height="4" fill="#fff" />
      <path d="M1 4h3v3H1zM1 5h-1M2 2v2M3 2v2" stroke="#fff" fill="#fff" strokeWidth=".7" />
    </Glyph>
  ),
};

const App = () => (
  <Page>
    <GlobalStyle />
    <TitleBar>
      <Glyph width="15" height="16" viewBox="0 0 14 16">
        <path d="M0 4l5-2v14l-5-1z" fill="#f08020" />
        <path d="M5 4l3 5 3-7 3-2v14l-3 1V8l-3 6-3-5z" fill="#2060c8" />
      </Glyph>
      <TitleText>updated stress analysis.liml - Mecway</TitleText>
      <WinButton>
        <Glyph width="10" height="1" viewBox="0 0 10 1">
          <path d="M0 .5h10" stroke="#999" />
        </Glyph>
      </WinButton>
      <WinButton>
        <Glyph width="10" height="10" viewBox="0 0 10 10">
          <path d="M.5 2.500h7v7h-7zM2.500 2.500v-2h7v7h-2" fill="none" stroke="#999" />
        </Glyph>
      </WinButton>
      <WinButton>
        <Glyph width="10" height="10" viewBox="0 0 10 10">
          <path d="M0 0l10 10M10 0L0 10" stroke="#999" />
        </Glyph>
      </WinButton>
    </TitleBar>

    <MenuBar>
      <MenuItem $w={37}>File</MenuItem>
      <MenuItem $w={39}>Edit</MenuItem>
      <MenuItem $w={44}>View</MenuItem>
      <MenuItem $w={77}>Mesh tools</MenuItem>
      <MenuItem $w={63}>Solution</MenuItem>
      <MenuItem $w={46}>Tools</MenuItem>
      <MenuItem $w={30}>Help</MenuItem>
    </MenuBar>

    <ToolRow $h={27} $top={2}>
      <ToolButton $w={22}>{tool.newDoc}</ToolButton>
      <ToolButton>{tool.open}</ToolButton>
      <ToolButton>{tool.save}</ToolButton>
      <ToolButton>{tool.undo}</ToolButton>
      <ToolButton>{tool.redo}</ToolButton>
      <ToolButton>{tool.bars}</ToolButton>
      <ToolSep />
      <ToolButton><WireCube face="spokes" /></ToolButton>
      <ToolButton><WireCube face="top" /></ToolButton>
      <ToolButton><WireCube face="bottom" /></ToolButton>
      <ToolButton><WireCube face="left" /></ToolButton>
      <ToolButton><WireCube face="right" /></ToolButton>
      <ToolButton><WireCube face="back" /></ToolButton>
      <ToolButton><WireCube face="front" /></ToolButton>
      <ToolButton>{tool.zoomBox}</ToolButton>
      <ToolButton>{tool.magnifier}</ToolButton>
      <ToolButton>{tool.rotate}</ToolButton>
      <ToolButton>{tool.tape}</ToolButton>
      <ToolSep />
      <ToolButton $on>{tool.glasses}</ToolButton>
      <ToolButton $w={27}>{tool.dots}</ToolButton>
      <ToolButton $w={8}>{tool.drop}</ToolButton>
      <ToolButton $w={23}>{tool.paper}</ToolButton>
      <ToolButton $on>{tool.slab}</ToolButton>
      <ToolButton $on>{tool.solid}</ToolButton>
      <ToolButton $on>{tool.wire}</ToolButton>
      <ToolButton>{tool.mesh}</ToolButton>
      <ScrollStrip>
        <ScrollArrow><ScrollChevron dir="left" /></ScrollArrow>
        <ScrollThumb />
        <ScrollArrow><ScrollChevron dir="right" /></ScrollArrow>
      </ScrollStrip>
    </ToolRow>

    <ToolRow $h={26}>
      <ToolButton $on>{tool.pickBox}</ToolButton>
      <ToolButton>{tool.pickNode}</ToolButton>
      <ToolButton>{tool.pickEdge}</ToolButton>
      <ToolButton>{tool.pickFace}</ToolButton>
      <ToolSep $w={2} />
      <ToolButton>{tool.burst}</ToolButton>
      <ToolButton>{tool.burstBox}</ToolButton>
      <ToolButton>{tool.redSquare}</ToolButton>
      <ToolButton>{tool.redCube}</ToolButton>
      <ToolButton>{tool.cross}</ToolButton>
      <ToolButton>{tool.nodeZig}</ToolButton>
      <ToolButton>{tool.listBrace}</ToolButton>
      <ToolSep $w={6} />
      <ToolButton>{tool.squares}</ToolButton>
      <ToolButton>{tool.squareDiamond}</ToolButton>
      <ToolButton>{tool.mirror}</ToolButton>
      <ToolButton>{tool.squareBig}</ToolButton>
      <ToolButton>{tool.can}</ToolButton>
      <ToolButton>{tool.arch}</ToolButton>
      <ToolButton>{tool.sweep}</ToolButton>
      <ToolButton>{tool.fork}</ToolButton>
      <ToolButton>{tool.scatter}</ToolButton>
      <ToolButton>{tool.nodeMap}</ToolButton>
      <ToolButton>{tool.triTri}</ToolButton>
      <ToolButton>{tool.triDots}</ToolButton>
      <ToolSep $w={3} />
      <ToolButton $on>{tool.bowl("#8f8f8f")}</ToolButton>
      <ToolButton>{tool.bowl("#a8a8a8")}</ToolButton>
      <ToolButton>{tool.camera}</ToolButton>
      <ToolButton>{tool.film}</ToolButton>
      <ToolButton $w={9}>{tool.dropGray}</ToolButton>
      <ToolButton $w={24}>{tool.table}</ToolButton>
    </ToolRow>

    <TabStrip>
      <Tab>Configuration</Tab>
    </TabStrip>

    <Workspace>
      <TreePanel>
        <TreeBranch nodes={TREE} trail={[]} />
      </TreePanel>
      <Canvas>
        <ModelView />
        <ViewOverlay>
          <ToolButton><ViewCube mode="dot" /></ToolButton>
          <ToolButton $on><ViewCube mode="face" /></ToolButton>
          <ToolButton><ViewCube mode="solid" /></ToolButton>
        </ViewOverlay>
      </Canvas>
    </Workspace>

    <StatusBar>
      <StatusItem $w={102}>Elements: 3328</StatusItem>
      <StatusItem $w={93}>Nodes: 10192</StatusItem>
      <StatusItem>Selected faces: 104</StatusItem>
      <StatusSpacer />
      <StatusItem $wide>(7.2697E-05, -1423.5, 736.8) mm</StatusItem>
    </StatusBar>

    <TaskBar>
      <StartSlot>
        <Glyph width="34" height="34" viewBox="0 0 34 34">
          <g fill="#f2f2f2">
            <path d="M18 2c2.500 4 2.500 9 0 14-1.500-4-1.500-9 0-14z" />
            <path d="M20 18c4-2 9-2.500 13-1-4 3-9 3.500-13 1z" />
            <path d="M15 19c-2 4-2 9 0 14 1.500-4 2-9 0-14z" />
            <path d="M13 17c-4-2-8-1.500-12 1.500 4 1 9 .5 12-1.500z" />
          </g>
        </Glyph>
      </StartSlot>
      <AppTile>
        <Glyph width="24" height="24" viewBox="0 0 24 24">
          <path d="M2 3l19-2 1 14-19 3z" fill="#c8ccd0" stroke="#8a8f94" />
          <path d="M4 5l15-1.500.6 9.500L4.500 15z" fill="#eef4fa" />
          <path d="M5 11l3-1 2-4 2 6 2-5 2 4 3-1" fill="none" stroke="#4f8fd0" />
          <path d="M8 18l9-1 1 3-3 3H9z" fill="#9a9a9a" />
        </Glyph>
      </AppTile>
      <AppTile $running>
        <Glyph width="24" height="24" viewBox="0 0 24 24">
          <circle cx="12" cy="13" r="10.500" fill="#ff7139" />
          <path d="M12 2c5 1 10 5 10 11 0-5-4-8-6-10 1 2 0 3-1 4-1-2-2-4-3-5z" fill="#ffcb2c" />
          <circle cx="12.500" cy="13" r="5" fill="#7a3fc0" />
          <path d="M7 11c2-2 5-2 6 0-2 0-3 1-6 0z" fill="#ffb040" />
          <path d="M2 12c1 6 6 11 12 10-6-1-9-5-9-10z" fill="#e8305a" />
        </Glyph>
      </AppTile>
      <AppTile $running>
        <Glyph width="22" height="20" viewBox="0 0 22 20">
          <path d="M0 1h8l2 2h12v17H0z" fill="#f9c53c" />
          <rect y="5" width="22" height="3" fill="#fde18a" />
          <path d="M0 8h22v12H0z" fill="#f7d262" />
          <path d="M6 20v-6h10v6h-3v-3H9v3z" fill="#2f8ad8" />
        </Glyph>
      </AppTile>
      <AppTile $active $running>
        <Glyph width="22" height="24" viewBox="0 0 22 24">
          <path d="M0 6l6-1 1 17-5 1z" fill="#f07a10" />
          <path d="M6 5l4 8 4-9 6-4 1 17-5 2-1-8-4 8-4-6z" fill="#2058c8" />
          <path d="M7 10l3 5 3-6v8l-3 3-3-5z" fill="#8ab0f0" />
        </Glyph>
      </AppTile>
      <TaskSpacer />
      <TrayBadge $bg="#ff0000"><span>3.4</span></TrayBadge>
      <TrayBadge $bg="#ff0000"><span>47</span></TrayBadge>
      <TrayBadge $bg="#3c0a3c"><span>4.0</span></TrayBadge>
      <TrayBadge $bg="#700000"><span>0.0</span></TrayBadge>
      <TrayBadge><span>120</span></TrayBadge>
      <TrayBadge><span>118</span></TrayBadge>
      <TrayBadge><span>95</span></TrayBadge>
      <TrayIcon>{tray.meter}</TrayIcon>
      <TrayIcon>{tray.doc}</TrayIcon>
      <TrayIcon>{tray.disk}</TrayIcon>
      <TrayIcon>{tray.waves}</TrayIcon>
      <TrayIcon>{tray.sound}</TrayIcon>
      <TrayIcon>{tray.avast}</TrayIcon>
      <TrayIcon>{tray.shield}</TrayIcon>
      <TrayIcon>{tray.wifi}</TrayIcon>
      <TrayIcon>{tray.monitor}</TrayIcon>
      <TrayIcon>{tray.fn}</TrayIcon>
      <TrayIcon>{tray.dots}</TrayIcon>
      <TrayIcon>{tray.battery}</TrayIcon>
      <Clock>
        3:13 PM
        <br />
        11/14/2019
      </Clock>
      <NotifySlot>
        <Glyph width="16" height="15" viewBox="0 0 16 15">
          <path d="M.5.500h15v10h-4v4l-4-4H.5z" fill="none" stroke="#fff" />
        </Glyph>
      </NotifySlot>
    </TaskBar>

    <Dialog>
      <DialogTitle>
        pressure
        <Glyph width="11" height="11" viewBox="0 0 11 11">
          <path d="M.5.500l10 10M10.500.500l-10 10" stroke="#fff" />
        </Glyph>
      </DialogTitle>
      <DialogBody>
        <ApplyRow>
          <ApplyLabel>Apply to</ApplyLabel>
          <SelectBox $w={237}>
            Top_ring(2)
            <Chevron />
          </SelectBox>
        </ApplyRow>
        <RadioRow>
          <RadioOption $w={105}>
            <RadioDot $on />
            Normal
          </RadioOption>
          <RadioOption $w={70}>
            <RadioDot />
            X, Y, Z
          </RadioOption>
        </RadioRow>
        <GroupBox>
          <ValueInput>50*5.7</ValueInput>
          <FieldRow $gap={1}>
            <HelpGroup>
              <Glyph width="13" height="13" viewBox="0 0 13 13">
                <circle cx="6.500" cy="6.500" r="6" fill="#7b93d8" />
                <path d="M4.500 5c0-2.500 4-2.500 4 0 0 1.500-2 1.500-2 3" fill="none" stroke="#fff" strokeWidth="1.400" />
                <circle cx="6.500" cy="10" r=".9" fill="#fff" />
              </Glyph>
              <FxMark>fx</FxMark>
            </HelpGroup>
            <SelectBox $w={92}>
              MPa
              <Chevron />
            </SelectBox>
          </FieldRow>
          <FieldRow $gap={3}>
            <PositionLabel>Position, x,y,z</PositionLabel>
            <SelectBox $w={92}>
              m
              <Chevron />
            </SelectBox>
          </FieldRow>
        </GroupBox>
        <ButtonRow>
          <DialogButton $primary>OK</DialogButton>
          <DialogButton>Cancel</DialogButton>
        </ButtonRow>
      </DialogBody>
    </Dialog>
  </Page>
);

export default App;
